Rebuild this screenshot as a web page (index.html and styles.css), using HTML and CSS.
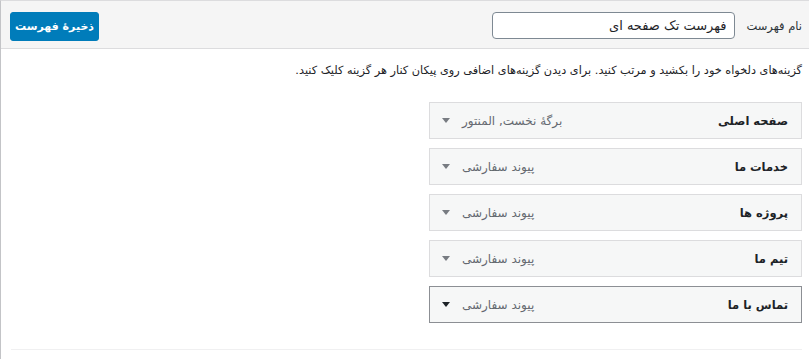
FILE: index.html
```html
<!DOCTYPE html>
<html lang="fa" dir="rtl">
<head>
<meta charset="utf-8">
<link rel="stylesheet" href="styles.css">
</head>
<body>
<div class="frame">
  <div class="header">
    <div class="name-field">
      <label class="name-label">نام فهرست</label>
      <input class="name-input" type="text" value="فهرست تک صفحه ای">
    </div>
    <button class="save-btn">ذخیرهٔ فهرست</button>
  </div>
  <div class="body">
    <p class="desc">گزینه‌های دلخواه خود را بکشید و مرتب کنید. برای دیدن گزینه‌های اضافی روی پیکان کنار هر گزینه کلیک کنید.</p>
    <ul class="items">
      <li class="item"><span class="item-title">صفحه اصلی</span><span class="item-controls"><span class="item-type">برگهٔ نخست, المنتور</span><span class="arrow"></span></span></li>
      <li class="item"><span class="item-title">خدمات ما</span><span class="item-controls"><span class="item-type">پیوند سفارشی</span><span class="arrow"></span></span></li>
      <li class="item"><span class="item-title">پروژه ها</span><span class="item-controls"><span class="item-type">پیوند سفارشی</span><span class="arrow"></span></span></li>
      <li class="item"><span class="item-title">تیم ما</span><span class="item-controls"><span class="item-type">پیوند سفارشی</span><span class="arrow"></span></span></li>
      <li class="item active"><span class="item-title">تماس با ما</span><span class="item-controls"><span class="item-type">پیوند سفارشی</span><span class="arrow"></span></span></li>
    </ul>
    <div class="footer-line"></div>
  </div>
</div>
</body>
</html>
```
FILE: styles.css
```css
html, body {
  margin: 0;
  padding: 0;
  background: #ffffff;
}
body {
  font-family: Tahoma, "DejaVu Sans", sans-serif;
  font-size: 12px;
  color: #1d2327;
  direction: rtl;
}
.frame {
  border-top: 1px solid #dcdcde;
  border-left: 1px solid #c3c4c7;
  height: 358px;
}
.header {
  background: #f5f5f5;
  border-bottom: 1px solid #dcdcde;
  height: 48px;
  box-sizing: border-box;
  padding: 11px 7px 0 9px;
  display: flex;
  justify-content: space-between;
  align-items: flex-start;
}
.name-field {
  display: flex;
  align-items: center;
  gap: 11px;
  height: 27px;
}
.name-label {
  font-size: 11.5px;
  color: #2c3338;
}
.name-input {
  width: 243px;
  height: 27px;
  box-sizing: border-box;
  border: 1px solid #7e8993;
  border-radius: 4px;
  background: #ffffff;
  font-family: Tahoma, "DejaVu Sans", sans-serif;
  font-size: 13px;
  color: #1d2327;
  padding: 0 8px;
  direction: rtl;
  margin: 0;
}
.save-btn {
  width: 89px;
  height: 29px;
  border: 1px solid #007cba;
  background: #007cba;
  color: #ffffff;
  border-radius: 3px;
  font-family: Tahoma, "DejaVu Sans", sans-serif;
  font-size: 11px;
  font-weight: bold;
  padding: 0;
  margin: 0;
}
.body {
  padding: 12px 7px 0 9px;
}
.desc {
  margin: 0;
  font-size: 11.3px;
  line-height: 20px;
  color: #1d2327;
}
.items {
  list-style: none;
  margin: 21px 0 0 0;
  padding: 0;
  display: flex;
  flex-direction: column;
  gap: 9px;
}
.item {
  width: 373px;
  height: 37px;
  box-sizing: border-box;
  border: 1px solid #dcdcde;
  background: #f6f7f7;
  display: flex;
  justify-content: space-between;
  align-items: center;
  padding: 0 13px 0 12px;
}
.item.active {
  border-color: #8c8f94;
}
.item-title {
  font-weight: bold;
  font-size: 11.5px;
  color: #1d2327;
}
.item-controls {
  display: flex;
  align-items: center;
  gap: 12px;
}
.item-type {
  font-size: 12px;
  color: #646970;
}
.arrow {
  width: 0;
  height: 0;
  border-left: 4px solid transparent;
  border-right: 4px solid transparent;
  border-top: 5px solid #787c82;
}
.item.active .arrow {
  border-top-color: #1d2327;
}
.footer-line {
  margin-top: 26px;
  border-top: 1px solid #f0f0f1;
  width: 791px;
}
```
